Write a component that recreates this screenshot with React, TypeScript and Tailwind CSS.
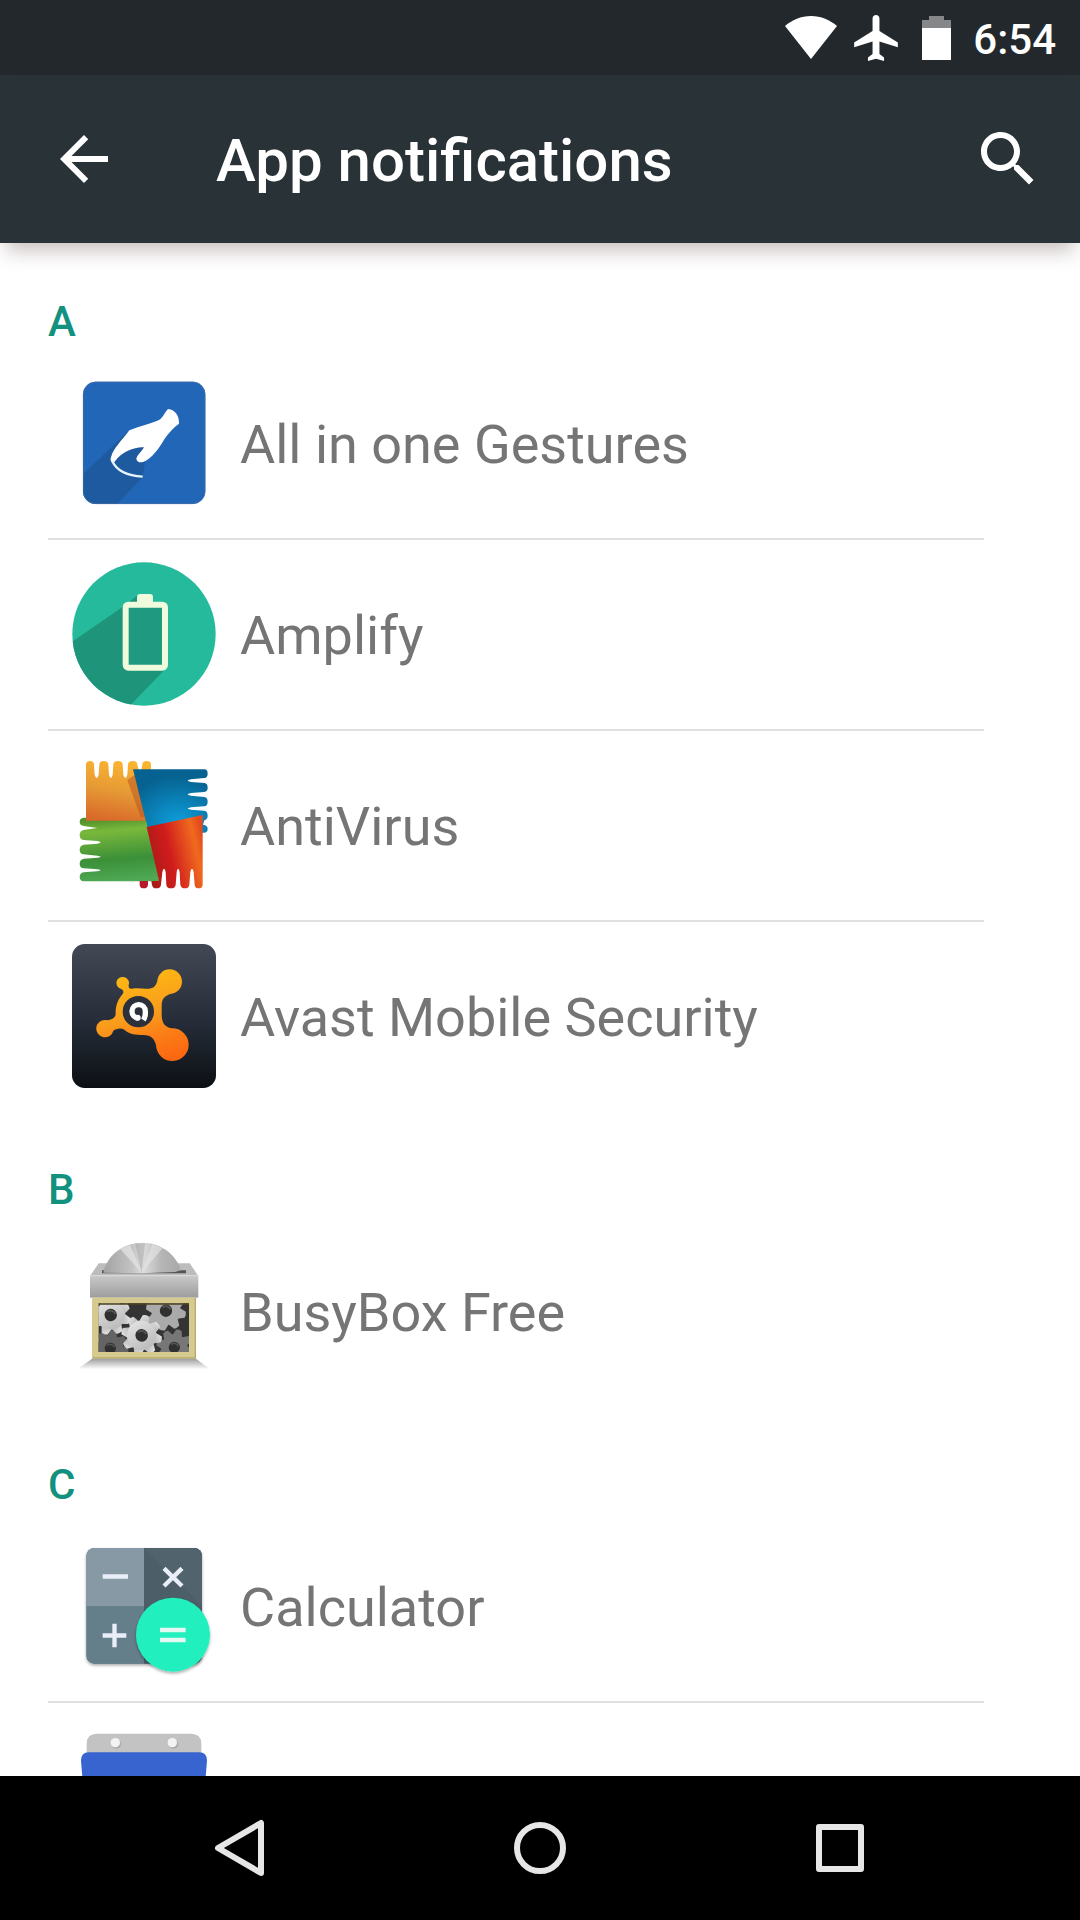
import React from "react";

const GEAR_TEETH = [0, 45, 90, 135, 180, 225, 270, 315];

function Gear({ x, y, r, fill, turn }: { x: number; y: number; r: number; fill: string; turn: number }) {
  return (
    <g transform={`translate(${x} ${y}) rotate(${turn}) scale(${r / 58})`}>
      {GEAR_TEETH.map((angle) => (
        <path key={angle} transform={`rotate(${angle})`} d="M-16 -36 L-9 -57 Q0 -60 9 -57 L16 -36Z" fill={fill} />
      ))}
      <circle r="42" fill={fill} />
      <circle r="18" fill="#303030" />
      <path d="M-12 -6a14 14 0 0 1 24 0" stroke="#555" strokeWidth="5" fill="none" />
    </g>
  );
}

function GesturesIcon() {
  return (
    <svg viewBox="96 33 432 432" className="size-36 shrink-0" aria-hidden="true">
      <defs>
        <clipPath id="gesture-tile"><rect x="129" y="65" width="367" height="367" rx="38" /></clipPath>
      </defs>
      <rect x="129" y="65" width="367" height="367" rx="38" fill="#2266b8" />
      <path clipPath="url(#gesture-tile)" d="M265 213L100 370V470H195L308 352L320 270Z" fill="#1e5a9f" />
      <rect x="130" y="66" width="365" height="365" rx="37" fill="none" stroke="#4a6fa5" strokeWidth="2" />
      <path d="M384 147C404 149 418 165 417 191C400 203 384 220 372 239C356 267 336 292 316 303C303 311 290 306 289 296C292 284 304 277 312 262C290 259 246 273 224 305C215 312 209 303 213 292C220 264 246 242 268 211C296 199 335 191 357 180C370 172 375 156 384 147Z" fill="#fff" />
      <path d="M217 304C232 336 268 348 308 350" stroke="#e6f6ff" strokeWidth="7" fill="none" />
    </svg>
  );
}

function AmplifyIcon() {
  return (
    <svg viewBox="96 65 432 432" className="size-36 shrink-0" aria-hidden="true">
      <defs>
        <clipPath id="amplify-disc"><circle cx="312" cy="281" r="215" /></clipPath>
      </defs>
      <circle cx="312" cy="281" r="215" fill="#25ba9b" />
      <path clipPath="url(#amplify-disc)" d="M294 164L248 200L90 308V500H266L376 386L376 200Z" fill="#1e957b" />
      <rect x="257" y="193" width="118" height="189" rx="8" fill="#1f9a80" stroke="#effbdd" strokeWidth="18" />
      <path d="M291 190V171Q291 161 301 161H330Q339 161 339 171V190Z" fill="#effbdd" />
    </svg>
  );
}

function AntiVirusIcon() {
  return (
    <svg viewBox="96 69 432 432" className="size-36 shrink-0" aria-hidden="true">
      <defs>
        <linearGradient id="av-orange" x1="0.6" y1="0" x2="0.4" y2="1">
          <stop offset="0" stopColor="#fbb430" /><stop offset="0.5" stopColor="#e69a35" /><stop offset="1" stopColor="#d9692a" />
        </linearGradient>
        <radialGradient id="av-blue" cx="0.6" cy="0.85" r="0.75">
          <stop offset="0" stopColor="#0e9fdc" /><stop offset="1" stopColor="#066290" />
        </radialGradient>
        <linearGradient id="av-green" x1="0.4" y1="0" x2="0.5" y2="1">
          <stop offset="0" stopColor="#4f8f2a" /><stop offset="0.2" stopColor="#7ab83c" /><stop offset="0.65" stopColor="#3b9038" /><stop offset="1" stopColor="#4fa955" />
        </linearGradient>
        <linearGradient id="av-red" x1="0" y1="0.6" x2="1" y2="0.3">
          <stop offset="0" stopColor="#a81b19" /><stop offset="0.4" stopColor="#d01c1c" /><stop offset="0.85" stopColor="#f06a1e" /><stop offset="1" stopColor="#e34c1d" />
        </linearGradient>
      </defs>
      <path d="M138 274V104Q138 93 150 93Q162 93 162 104L164 134Q170 154 176 134L178 104Q178 93 191 93Q205 93 205 104L207 134Q213 154 218 134L220 104Q220 93 234 93Q248 93 248 104L250 134Q256 154 262 134L264 104Q264 93 278 93Q292 93 292 104L296 120H304L307 104Q307 93 320 93Q333 93 333 104V274Z" fill="url(#av-orange)" />
      <path d="M262 150L284 135L320 260L302 262Z" fill="#ba5722" opacity="0.55" />
      <path d="M279 118H493Q503 118 503 131Q503 143 493 144L453 148Q433 152 453 156L493 159Q503 160 503 173Q503 184 493 186L453 189Q433 193 453 197L493 201Q503 202 503 215Q503 227 493 229L453 232Q433 236 453 239L493 242Q503 244 503 257Q503 268 493 271L489 284Q503 285 503 296Q503 308 492 308H484V262L324 300Z" fill="url(#av-blue)" />
      <path d="M318 272L358 454H131Q119 453 119 441Q119 429 131 427L172 424Q192 421 172 418L131 415Q119 413 119 401Q119 389 131 386L172 383Q192 380 172 377L131 373Q119 371 119 359Q119 347 131 344L172 341Q192 337 172 333L131 330Q119 328 119 315Q119 303 131 300L172 294L131 288Q119 286 119 275Q119 264 131 263H138V272Z" fill="url(#av-green)" />
      <path d="M320 291L488 255V464Q487 475 476 475Q465 475 464 464L461 426Q456 406 451 426L448 464Q447 475 435 475Q423 475 421 464L419 426Q414 406 410 426L407 464Q406 475 393 475Q380 475 379 464L377 426Q372 406 367 426L363 464Q362 475 349 475Q337 475 336 464L334 453H357Z" fill="url(#av-red)" />
      <path d="M299 453H324V464Q323 475 311 475Q299 475 299 464Z" fill="#b9182b" />
    </svg>
  );
}

function AvastIcon() {
  return (
    <svg viewBox="96 72 432 432" className="size-36 shrink-0" aria-hidden="true">
      <defs>
        <linearGradient id="avast-tile" x1="0" y1="0" x2="0" y2="1">
          <stop offset="0" stopColor="#434855" /><stop offset="0.5" stopColor="#282f3b" /><stop offset="1" stopColor="#0c1014" />
        </linearGradient>
        <linearGradient id="avast-splat" gradientUnits="userSpaceOnUse" x1="310" y1="150" x2="390" y2="420">
          <stop offset="0" stopColor="#fdb813" /><stop offset="0.45" stopColor="#f99d1c" /><stop offset="0.75" stopColor="#fb7a16" /><stop offset="1" stopColor="#fb6710" />
        </linearGradient>
      </defs>
      <rect x="96" y="72" width="432" height="432" rx="38" fill="url(#avast-tile)" />
      <path d="M250 171A18 18 0 0 1 266 195C265 203 268 207 276 206C290 203 302 205 316 206C338 207 346 203 352 183A37 37 0 1 1 391 222C374 227 365 238 365 256V281C365 306 371 320 395 325A49 49 0 1 1 348 376C344 355 332 344 307 345C282 346 264 340 251 328C241 323 227 327 220 332A26 26 0 1 1 196 300C211 302 226 296 227 282C226 257 234 238 248 222C253 214 249 209 242 206A18 18 0 0 1 250 171Z" fill="url(#avast-splat)" />
      <circle cx="295" cy="275" r="47" fill="#2b303a" />
      <path d="M295 294A20 20 0 1 1 316 274Q317 290 310 300" fill="none" stroke="#fff" strokeWidth="16" />
      <circle cx="293" cy="293" r="9" fill="#fff" />
    </svg>
  );
}

function BusyBoxIcon() {
  return (
    <svg viewBox="96 57 432 432" className="size-36 shrink-0" aria-hidden="true">
      <defs>
        <linearGradient id="bb-lid" x1="0" y1="0" x2="0" y2="1">
          <stop offset="0" stopColor="#c9c9c9" /><stop offset="1" stopColor="#9d9d9d" />
        </linearGradient>
        <linearGradient id="bb-disc" x1="0" y1="0" x2="1" y2="0">
          <stop offset="0" stopColor="#a2a2a2" /><stop offset="0.38" stopColor="#c4c4c4" /><stop offset="0.5" stopColor="#dedede" /><stop offset="0.75" stopColor="#b5b5b5" /><stop offset="1" stopColor="#a8a8a8" />
        </linearGradient>
        <linearGradient id="bb-shadow" x1="0" y1="0" x2="0" y2="1">
          <stop offset="0" stopColor="#9b9b9b" /><stop offset="1" stopColor="#fff" />
        </linearGradient>
        <linearGradient id="bb-gear" x1="0" y1="0" x2="1" y2="1">
          <stop offset="0" stopColor="#e8e8e8" /><stop offset="1" stopColor="#b4b4b4" />
        </linearGradient>
        <clipPath id="bb-window"><rect x="176" y="250" width="271" height="146" /></clipPath>
      </defs>
      <path d="M158 415H466L510 448H112Z" fill="url(#bb-shadow)" />
      <path d="M176 130H449L475 168H150Z" fill="#bcbcbc" />
      <path d="M186 151H438V160H186Z" fill="#555" />
      <path d="M190 158C202 103 250 68 309 68C365 68 410 107 423 151L405 156L305 160Z" fill="url(#bb-disc)" />
      <path d="M305 158L240 86L270 75Z" fill="#e6e6e6" opacity="0.7" />
      <path d="M305 158L285 70H315Z" fill="#a4a4a4" opacity="0.5" />
      <path d="M305 158L337 72L368 85Z" fill="#e6e6e6" opacity="0.6" />
      <rect x="150" y="166" width="325" height="67" fill="url(#bb-lid)" />
      <path d="M150 167H475" stroke="#ddd" strokeWidth="3" />
      <rect x="156" y="233" width="311" height="182" fill="#d6ca8e" />
      <path d="M158 414H466V234" stroke="#b8aa70" strokeWidth="4" fill="none" />
      <rect x="176" y="250" width="271" height="146" fill="#343434" />
      <g clipPath="url(#bb-window)">
        <Gear x={211} y={385} r={54} fill="#646464" turn={10} />
        <Gear x={403} y={382} r={54} fill="#777" turn={15} />
        <Gear x={378} y={272} r={60} fill="#aaa" turn={12} />
        <Gear x={212} y={285} r={60} fill="url(#bb-gear)" turn={18} />
        <Gear x={305} y={346} r={61} fill="url(#bb-gear)" turn={12} />
      </g>
      <path d="M176 252H447" stroke="#4a4220" strokeWidth="5" />
    </svg>
  );
}

function CalculatorIcon() {
  return (
    <svg viewBox="96 42 432 432" className="size-36 shrink-0 overflow-visible" aria-hidden="true">
      <defs>
        <clipPath id="calc-body"><rect x="139" y="84" width="347" height="347" rx="24" /></clipPath>
        <filter id="calc-shadow" x="-20%" y="-20%" width="140%" height="150%">
          <feDropShadow dx="0" dy="5" stdDeviation="4" floodColor="#000" floodOpacity="0.35" />
        </filter>
      </defs>
      <rect x="139" y="84" width="347" height="347" rx="24" fill="#607d89" filter="url(#calc-shadow)" />
      <g clipPath="url(#calc-body)">
        <rect x="139" y="84" width="173" height="174" fill="#8699a4" />
        <rect x="139" y="258" width="173" height="174" fill="#647e8a" />
        <rect x="312" y="84" width="175" height="348" fill="#4c5e68" />
        <path d="M312 84L486 258V84Z" fill="#51646e" />
      </g>
      <path d="M188 169.500H264M188 346.500H259M223.500 311V382M372 145L426 198M426 145L372 198" stroke="#e9eef8" strokeWidth="13" />
      <circle cx="399" cy="344" r="111" fill="#24efbe" filter="url(#calc-shadow)" />
      <path d="M360 330H437M360 360H437" stroke="#e3f7f3" strokeWidth="14" />
    </svg>
  );
}

function CalendarIcon() {
  return (
    <svg viewBox="96 615 432 432" className="size-36 shrink-0" aria-hidden="true">
      <path d="M140 720V672Q140 641 170 641H453Q484 641 484 672V720Z" fill="#c3c3c3" />
      <circle cx="229" cy="672" r="14" fill="#aaa" />
      <circle cx="401" cy="672" r="14" fill="#aaa" />
      <circle cx="226" cy="668" r="14" fill="#f3f3f3" />
      <circle cx="397" cy="668" r="14" fill="#f3f3f3" />
      <path d="M147 697H477Q501 697 501 722L488 880V1020H136V880L123 722Q123 697 147 697Z" fill="#3764cf" />
    </svg>
  );
}

type AppEntry = { name?: string; icon: React.ReactNode };

const sections: { letter: string; apps: AppEntry[] }[] = [
  {
    letter: "A",
    apps: [
      { name: "All in one Gestures", icon: <GesturesIcon /> },
      { name: "Amplify", icon: <AmplifyIcon /> },
      { name: "AntiVirus", icon: <AntiVirusIcon /> },
      { name: "Avast Mobile Security", icon: <AvastIcon /> },
    ],
  },
  { letter: "B", apps: [{ name: "BusyBox Free", icon: <BusyBoxIcon /> }] },
  {
    letter: "C",
    apps: [{ name: "Calculator", icon: <CalculatorIcon /> }, { icon: <CalendarIcon /> }],
  },
];

function StatusBar() {
  return (
    <div className="flex h-[75px] shrink-0 items-center justify-end bg-[#23282c] pr-6 text-white">
      <svg viewBox="0 0 54 44" className="mr-4 h-11 w-[54px]" aria-hidden="true">
        <path d="M27 43L1 10C8 4 17 0 27 0S46 4 53 10Z" fill="currentColor" />
      </svg>
      <svg viewBox="2 2 19 20" className="mr-6 h-[46px] w-11" aria-hidden="true">
        <path
          d="M21 16v-2l-8-5V3.500c0-.83-.67-1.500-1.500-1.500S10 2.670 10 3.500V9l-8 5v2l8-2.500V19l-2 1.500V22l3.500-1 3.500 1v-1.500L13 19v-5.500l8 2.500z"
          fill="currentColor"
        />
      </svg>
      <svg viewBox="0 0 29 44" className="mr-[22px] h-11 w-[29px]" aria-hidden="true">
        <path d="M0 4H7V0H22V4H29V12H0Z" fill="#858789" />
        <path d="M0 12H29V44H0Z" fill="currentColor" />
      </svg>
      <time className="pt-1 text-[42px] leading-[48px] font-medium">6:54</time>
    </div>
  );
}

function Toolbar() {
  return (
    <header className="relative z-10 flex h-[168px] shrink-0 items-center bg-[#293236] px-9 text-white shadow-[0_14px_18px_-6px_rgba(50,20,20,0.26)]">
      <button type="button" aria-label="Back" className="ml-3">
        <svg viewBox="0 0 24 24" className="size-[72px]" aria-hidden="true">
          <path d="M20 11H7.830l5.590-5.590L12 4l-8 8 8 8 1.410-1.410L7.830 13H20v-2z" fill="currentColor" />
        </svg>
      </button>
      <h1 className="ml-24 flex-1 pt-1 text-[60px] leading-[72px] font-medium">App notifications</h1>
      <button type="button" aria-label="Search">
        <svg viewBox="0 0 24 24" className="size-[72px]" aria-hidden="true">
          <path
            d="M15.500 14h-.79l-.28-.27C15.410 12.590 16 11.110 16 9.500 16 5.910 13.090 3 9.500 3S3 5.910 3 9.500 5.910 16 9.500 16c1.610 0 3.090-.59 4.230-1.570l.27.28v.79l5 4.990L20.490 19l-4.990-5zm-6 0C7.010 14 5 11.990 5 9.500S7.010 5 9.500 5 14 7.010 14 9.500 11.990 14 9.500 14z"
            fill="currentColor"
          />
        </svg>
      </button>
    </header>
  );
}

function NavigationBar() {
  return (
    <nav className="relative z-10 flex h-36 shrink-0 items-center justify-center bg-black text-[#e6e6e6]">
      <button type="button" aria-label="Back" className="flex w-[300px] justify-center">
        <svg viewBox="0 0 60 60" className="size-[60px]" fill="none" stroke="currentColor" strokeWidth="6" strokeLinejoin="round" aria-hidden="true">
          <path d="M8 30L51 5V55Z" />
        </svg>
      </button>
      <button type="button" aria-label="Home" className="flex w-[300px] justify-center">
        <svg viewBox="0 0 60 60" className="size-[60px]" fill="none" stroke="currentColor" strokeWidth="6" aria-hidden="true">
          <circle cx="30" cy="30" r="23" />
        </svg>
      </button>
      <button type="button" aria-label="Recent apps" className="flex w-[300px] justify-center">
        <svg viewBox="0 0 60 60" className="size-[60px]" fill="none" stroke="currentColor" strokeWidth="6" strokeLinejoin="round" aria-hidden="true">
          <rect x="9" y="9" width="42" height="42" />
        </svg>
      </button>
    </nav>
  );
}

export default function App() {
  return (
    <div className="flex h-screen flex-col bg-white font-['Roboto',sans-serif]">
      <StatusBar />
      <Toolbar />
      <main className="min-h-0 flex-1 overflow-hidden pt-0.5 pr-24 pl-12">
        {sections.map(({ letter, apps }) => (
          <section key={letter}>
            <h2 className="h-[104px] pt-[53px] text-[42px] leading-[48px] font-medium text-[#12917f]">{letter}</h2>
            <ul>
              {apps.map(({ name, icon }, index) => (
                <li key={index} className="h-[191px] border-b-2 border-[#e0e0e0] last:border-transparent">
                  <button type="button" aria-label={name ? undefined : "Calendar"} className="flex size-full items-center gap-6 pb-px pl-6 text-left">
                    {icon}
                    {name && <span className="pt-1 text-[54px] leading-[64px] text-[#757575]">{name}</span>}
                  </button>
                </li>
              ))}
            </ul>
          </section>
        ))}
      </main>
      <NavigationBar />
    </div>
  );
}
